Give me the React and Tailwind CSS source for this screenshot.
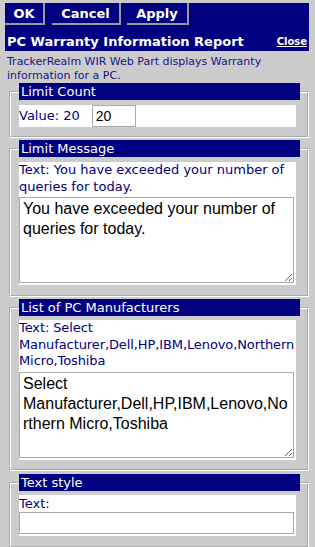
export default function App() {
  const ui = { fontFamily: '"DejaVu Sans", Verdana, sans-serif' };
  const arial = { fontFamily: '"Liberation Sans", Arial, sans-serif' };

  return (
    <div className="w-[315px] h-[547px] overflow-hidden bg-[#cccccc] pt-[3px]" style={ui}>
      {/* header */}
      <div className="ml-[5px] w-[304px] bg-[#000080]">
        <div className="flex h-[22px]">
          <button className="w-[40px] h-[22px] border-r-2 border-b-2 border-[#9a9a9a] text-white font-bold text-[13px] leading-none">OK</button>
          <button className="ml-[7px] w-[69px] h-[22px] border-r-2 border-b-2 border-[#9a9a9a] text-white font-bold text-[13px] leading-none">Cancel</button>
          <button className="ml-[6px] w-[62px] h-[22px] border-r-2 border-b-2 border-[#9a9a9a] text-white font-bold text-[13px] leading-none">Apply</button>
        </div>
        <div className="h-[26px] flex items-end justify-between pl-[2px] pr-[2px] pb-[1px]">
          <span className="text-white font-bold text-[13px] leading-[16px]">PC Warranty Information Report</span>
          <a className="text-white font-bold text-[10px] leading-[16px] underline">Close</a>
        </div>
      </div>

      <p className="pl-[7px] pt-[4px] text-[11px] leading-[14px] text-[#14148a]">
        TrackerRealm WIR Web Part displays Warranty information for a PC.
      </p>

      {/* Limit Count */}
      <fieldset className="ml-[9px] w-[300px] border-2 border-white [border-style:groove] pt-[5px] pl-[8px] pr-[5px] pb-[9px] mb-[2px]">
        <legend className="w-[281px] h-[17px] bg-[#000080] text-white text-[13px] leading-[17px] pl-[2px] p-0">Limit Count</legend>
        <div className="w-[277px] h-[22px] bg-white flex items-center text-[13px] text-[#000080]">
          <span>Value: 20</span>
          <input defaultValue="20" className="ml-[12px] w-[44px] h-[22px] border border-[#a9a9a9] px-[3px] text-[14px] text-black" style={arial} />
        </div>
      </fieldset>

      {/* Limit Message */}
      <fieldset className="ml-[9px] w-[300px] border-2 border-white [border-style:groove] pt-[5px] pl-[8px] pr-[5px] pb-[10px] mb-[2px]">
        <legend className="w-[281px] h-[17px] bg-[#000080] text-white text-[13px] leading-[17px] pl-[2px] p-0">Limit Message</legend>
        <div className="w-[277px] bg-white pb-[2px]">
          <div className="text-[13px] leading-[16.5px] text-[#000080]">Text: You have exceeded your number of queries for today.</div>
          <textarea
            defaultValue="You have exceeded your number of queries for today."
            className="block mt-[2px] w-[275px] h-[86px] border border-[#a9a9a9] px-[3px] py-[1px] text-[16px] leading-[20px] text-black bg-white"
            style={arial}
          />
        </div>
      </fieldset>

      {/* List of PC Manufacturers */}
      <fieldset className="ml-[9px] w-[300px] border-2 border-white [border-style:groove] pt-[4px] pl-[8px] pr-[5px] pb-[9px] mb-[3px]">
        <legend className="w-[281px] h-[17px] bg-[#000080] text-white text-[13px] leading-[17px] pl-[2px] p-0">List of PC Manufacturers</legend>
        <div className="w-[277px] bg-white pb-[2px]">
          <div className="text-[13px] leading-[16.5px] text-[#000080] tracking-[-0.1px]">Text: Select Manufacturer,Dell,HP,IBM,Lenovo,Northern Micro,Toshiba</div>
          <textarea
            defaultValue="Select Manufacturer,Dell,HP,IBM,Lenovo,Northern Micro,Toshiba"
            className="block mt-[2.5px] w-[275px] h-[86px] border border-[#a9a9a9] px-[3px] py-[1px] text-[16px] leading-[20px] text-black bg-white"
            style={arial}
          />
        </div>
      </fieldset>

      {/* Text style */}
      <fieldset className="ml-[9px] w-[300px] border-2 border-white [border-style:groove] pt-[4px] pl-[8px] pr-[5px] pb-[10px]">
        <legend className="w-[281px] h-[17px] bg-[#000080] text-white text-[13px] leading-[17px] pl-[2px] p-0">Text style</legend>
        <div className="w-[277px] bg-white pb-[2px]">
          <div className="text-[13px] leading-[17px] text-[#000080]">Text:</div>
          <input className="block w-[275px] h-[22px] border border-[#a9a9a9] bg-white" style={arial} />
        </div>
      </fieldset>
    </div>
  );
}
